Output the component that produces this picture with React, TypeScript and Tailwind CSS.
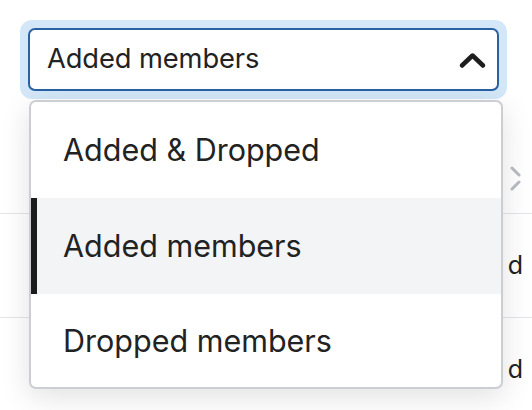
import React from "react";

export default function App() {
  const font = { fontFamily: "Inter, 'Noto Sans', sans-serif" };
  return (
    <div className="relative w-[532px] h-[410px] bg-white overflow-hidden text-[#222]" style={font}>
      {/* select */}
      <div className="pt-[20px] pl-[20px] w-[507px]">
        <div className="rounded-[12px] bg-[#d3e7f9] p-[8px]">
          <div className="h-[63px] rounded-[7px] border-2 border-[#2862a3] bg-white flex items-center justify-between pl-[17px] pr-[10px]">
            <span className="text-[27.3px] tracking-[-0.1px]">Added members</span>
            <svg width="30" height="18" viewBox="0 0 30 18">
              <path d="M5 14.5 L15.5 4.5 L26 14.5" fill="none" stroke="#1e1e1e" strokeWidth="4.5" strokeLinecap="round" strokeLinejoin="round" />
            </svg>
          </div>
        </div>
      </div>

      {/* underlying table */}
      <div className="flex flex-col">
        <div className="h-[114px] flex items-end justify-end pr-[10px] pb-[20px]">
          <svg width="12" height="28" viewBox="0 0 12 28">
            <path d="M2 3 L9 10" fill="none" stroke="#b9bcc2" strokeWidth="3" strokeLinecap="round" />
            <path d="M9 17 L2 24" fill="none" stroke="#b9bcc2" strokeWidth="3" strokeLinecap="round" />
          </svg>
        </div>
        <div className="h-[104px] border-t border-[#e3e5e8] flex items-center justify-end pr-[1px] text-[25px] tracking-[8px]">Added</div>
        <div className="h-[104px] border-t border-[#e3e5e8] flex items-center justify-end pr-[1px] text-[25px] tracking-[8px]">Added</div>
      </div>

      {/* dropdown */}
      <div className="absolute left-[29px] top-[100px] w-[474px] h-[289px] bg-white border-2 border-[#cbced3] rounded-[7px] shadow-[0_8px_30px_rgba(0,0,0,0.12)] overflow-hidden flex flex-col">
        <div className="h-[96px] flex items-center pl-[32px] text-[30.5px]">Added &amp; Dropped</div>
        <div className="h-[96px] flex items-center text-[30.5px] bg-[#f3f4f6] border-l-[8px] border-[#1c1c1e] -ml-[2px] pl-[26px]">Added members</div>
        <div className="flex-1 flex items-center pl-[32px] text-[30.5px]">Dropped members</div>
      </div>
    </div>
  );
}
